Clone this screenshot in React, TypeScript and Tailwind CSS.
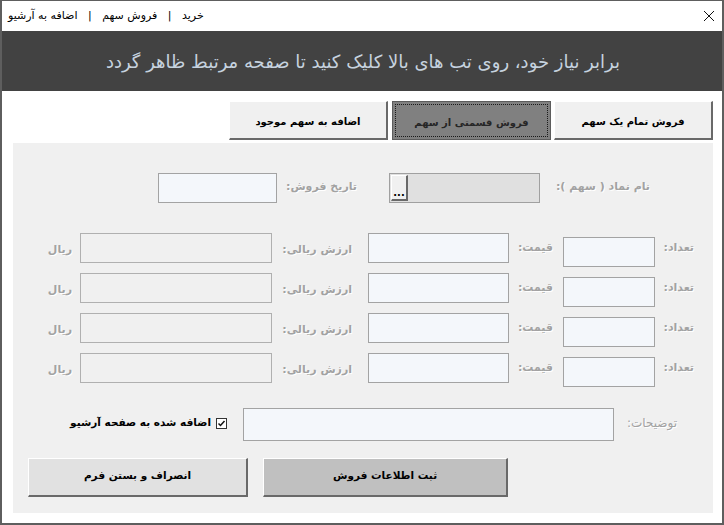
import type { ReactNode } from 'react'

function Label({ children, className = '' }: { children: ReactNode; className?: string }) {
  return (
    <span className={`whitespace-nowrap text-[11px] font-bold text-[#a2a2a2] [text-shadow:1px_1px_0_#ffffff] ${className}`}>
      {children}
    </span>
  )
}

const inputCls = 'border border-[#a3a3a3] bg-[#f4f7fb]'
const disabledCls = 'border border-[#b0b0b0] bg-[#f0f0f0]'
const raisedCls = 'border-t border-l border-t-white border-l-white border-b-2 border-r-2 border-b-[#696969] border-r-[#696969]'

function QtyRow() {
  return (
    <div dir="rtl" className="flex h-[34px] items-start pr-[19px]">
      <div className="flex h-[30px] w-[39px] items-center">
        <Label>تعداد:</Label>
      </div>
      <div className={`mt-[4px] h-[30px] w-[92px] ${inputCls}`} />
      <div className="flex h-[30px] w-[54px] items-center pr-[10px]">
        <Label>قیمت:</Label>
      </div>
      <div className={`h-[30px] w-[141px] ${inputCls}`} />
      <div className="flex h-[30px] w-[96px] items-center pr-[16px] pt-[4px]">
        <Label>ارزش ریالی:</Label>
      </div>
      <div className={`h-[30px] w-[192px] ${disabledCls}`} />
      <div className="flex h-[30px] items-center pr-[8px] pt-[4px]">
        <Label>ریال</Label>
      </div>
    </div>
  )
}

function Tab({ children, active = false }: { children: ReactNode; active?: boolean }) {
  return (
    <div
      className={`flex h-[39px] w-[159px] items-center justify-center pt-[3px] text-[10px] font-bold ${
        active
          ? 'border border-[#5c5c5c] bg-[#808080] text-[#262626] outline-1 outline-dotted outline-offset-[-4px] outline-[#1a1a1a]'
          : `bg-[#f0f0f0] text-black ${raisedCls}`
      }`}
    >
      {children}
    </div>
  )
}

export default function App() {
  return (
    <div className="h-[525px] w-[724px] overflow-hidden border-x-2 border-t border-b-2 border-[#5e5e5e] bg-white font-['DejaVu_Sans',sans-serif]">
      <div className="flex h-[30px] items-center justify-between pl-[6px] pr-[6px]">
        <span dir="rtl" className="text-[11px] text-black">
          خرید&nbsp;&nbsp; | &nbsp;&nbsp;فروش سهم&nbsp;&nbsp; | &nbsp;&nbsp;اضافه به آرشیو
        </span>
        <svg width="12" height="12" viewBox="0 0 12 12" className="mr-[1px]">
          <path d="M1 1 L11 11 M11 1 L1 11" stroke="#111" strokeWidth="1" />
        </svg>
      </div>

      <div dir="rtl" className="flex h-[60px] items-center bg-[#424242] pr-[102px] text-[18px] text-[#c6d2df]">
        برابر نیاز خود، روی تب های بالا کلیک کنید تا صفحه مرتبط ظاهر گردد
      </div>

      <div dir="rtl" className="mt-[10px] flex pr-[9px]">
        <Tab>فروش تمام یک سهم</Tab>
        <div className="w-[3px]" />
        <Tab active>فروش قسمتی از سهم</Tab>
        <div className="w-[4px]" />
        <Tab>اضافه به سهم موجود</Tab>
      </div>

      <div className="mt-[3px] ml-[11px] mr-[9px] h-[370px] bg-[#f0f0f0] pt-[30px]">
        <div dir="rtl" className="flex h-[30px] pr-[63px]">
          <div className="flex w-[110px] items-center pb-[2px]">
            <Label>نام نماد ( سهم ):</Label>
          </div>
          <div dir="ltr" className="flex h-[30px] w-[151px] border border-[#a0a0a0] bg-[#e0e0e0] p-[1px]">
            <div className={`flex h-full w-[17px] items-end justify-center bg-[#f0f0f0] pb-[1px] text-[10px] font-bold leading-none text-black ${raisedCls}`}>
              ...
            </div>
          </div>
          <div className="flex w-[112px] items-center pr-[32px] pb-[2px]">
            <Label>تاریخ فروش:</Label>
          </div>
          <div className={`h-[30px] w-[119px] ${inputCls}`} />
        </div>

        <div className="mt-[30px] flex flex-col gap-[6px]">
          <QtyRow />
          <QtyRow />
          <QtyRow />
          <QtyRow />
        </div>

        <div dir="rtl" className="mt-[21px] flex h-[33px] items-center pr-[36px]">
          <div className="flex h-full w-[63px] items-center pb-[4px]">
            <span className="whitespace-nowrap text-[12px] text-[#a2a2a2] [text-shadow:1px_1px_0_#ffffff]">توضیحات:</span>
          </div>
          <div className={`h-[33px] w-[371px] ${inputCls}`} />
          <div className="flex items-center gap-[5px] pr-[16px] pb-[3px]">
            <svg width="11" height="11" viewBox="0 0 11 11" className="shrink-0">
              <rect x="0.5" y="0.5" width="10" height="10" fill="#fff" stroke="#333" />
              <path d="M2.5 5.5 L4.5 7.5 L8.5 3" stroke="#111" strokeWidth="1.5" fill="none" />
            </svg>
            <span className="whitespace-nowrap text-[10.5px] font-bold text-black">اضافه شده به صفحه آرشیو</span>
          </div>
        </div>

        <div dir="rtl" className="mt-[17px] flex gap-[15px] pr-[205px]">
          <div className={`flex h-[39px] w-[245px] items-center justify-center bg-[#c0c0c0] pb-[2px] text-[10.5px] font-bold text-black ${raisedCls}`}>
            ثبت اطلاعات فروش
          </div>
          <div className={`flex h-[39px] w-[220px] items-center justify-center bg-[#e1e1e1] pb-[2px] text-[10.5px] font-bold text-black ${raisedCls}`}>
            انصراف و بستن فرم
          </div>
        </div>
      </div>
    </div>
  )
}
